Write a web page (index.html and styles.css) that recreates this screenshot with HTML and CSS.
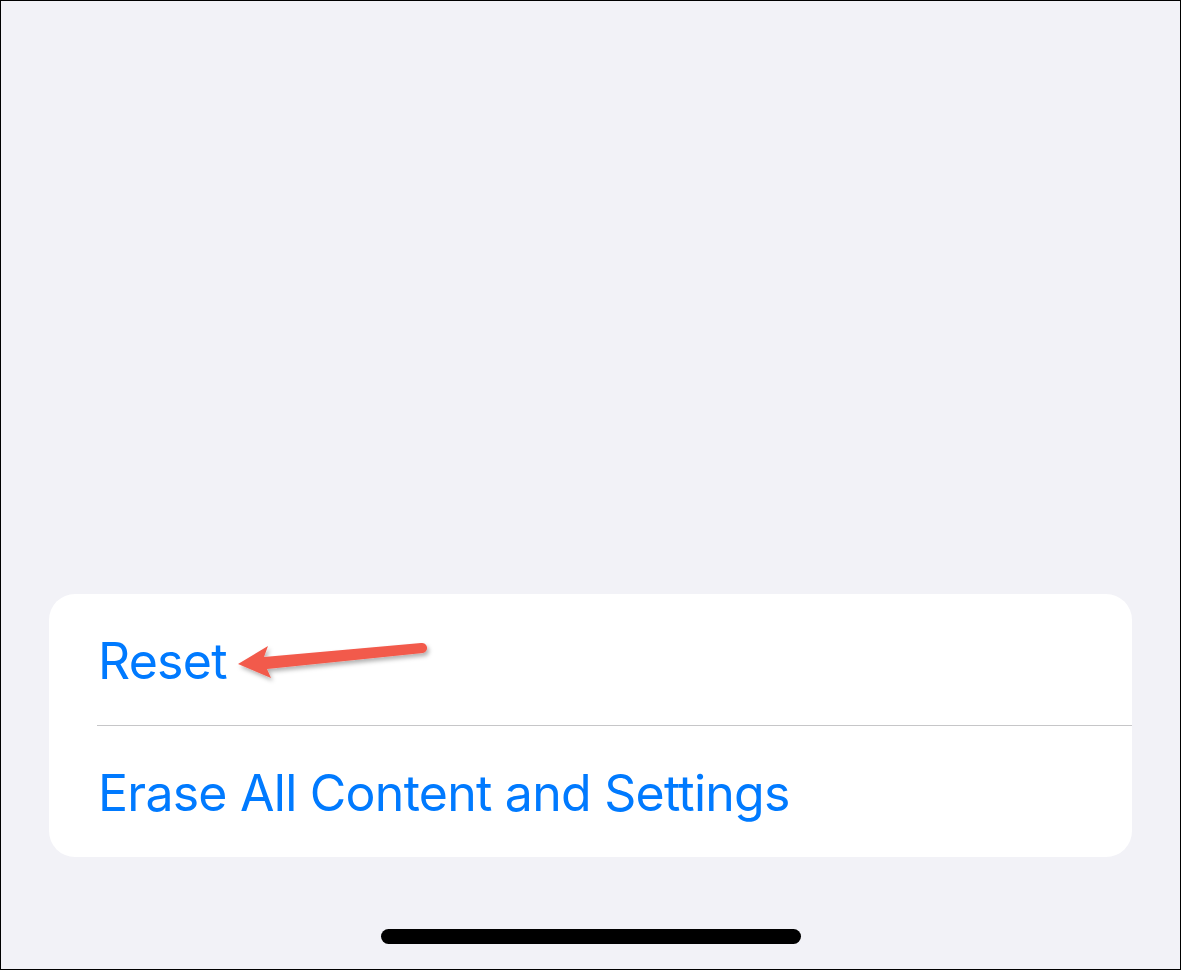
FILE: index.html
```html
<!DOCTYPE html>
<html lang="en">

<head>
    <meta charset="UTF-8">
    <meta name="viewport" content="width=device-width, initial-scale=1.0">

    <link rel="stylesheet" href="styles.css">

    <title>Reset</title>
</head>

<body>
    <div class="screen">
        <div class="group">
            <div class="row">Reset</div>
            <div class="divider"></div>
            <div class="row">Erase All Content and Settings</div>
        </div>
        <div class="home_area">
            <div class="home_bar"></div>
        </div>
    </div>

    <!-- annotation arrow, drawn over the card -->
    <svg class="arrow" width="1181" height="970" viewBox="0 0 1181 970">
        <defs>
            <filter id="shade" x="-10%" y="-50%" width="120%" height="200%">
                <feDropShadow dx="2" dy="3" stdDeviation="2" flood-color="#000" flood-opacity="0.3" />
            </filter>
        </defs>
        <path filter="url(#shade)" fill="#f25a4c"
            d="M238 664 L268 646 L264 657 L421 643 A5 5 0 0 1 423 653 L267 669 L271 678 Z" />
    </svg>
</body>

</html>
```

FILE: styles.css
```css
html,
body {
    margin: 0;
    background-color: #f2f2f7;
}

.screen {
    box-sizing: border-box;
    width: 1181px;
    height: 970px;
    border: 1px solid #000;
    display: flex;
    flex-direction: column;
    justify-content: flex-end;
}

.group {
    margin-left: 48px;
    width: 1083px;
    background-color: #fff;
    border-radius: 26px;
    overflow: hidden;
}

.row {
    height: 131px;
    display: flex;
    align-items: center;
    padding-left: 49px;
    padding-top: 3px;
    box-sizing: border-box;
    font-family: Inter, "Noto Sans", sans-serif;
    font-size: 50px;
    color: #007aff;
    letter-spacing: -0.75px;
}

.divider {
    height: 1px;
    margin-left: 48px;
    background-color: #c6c6c8;
}

.home_area {
    height: 112px;
    display: flex;
    justify-content: center;
    padding-top: 72px;
    box-sizing: border-box;
}

.home_bar {
    width: 420px;
    height: 15px;
    border-radius: 8px;
    background-color: #000;
}

.arrow {
    position: absolute;
    top: 0;
    left: 0;
    pointer-events: none;
}
```
